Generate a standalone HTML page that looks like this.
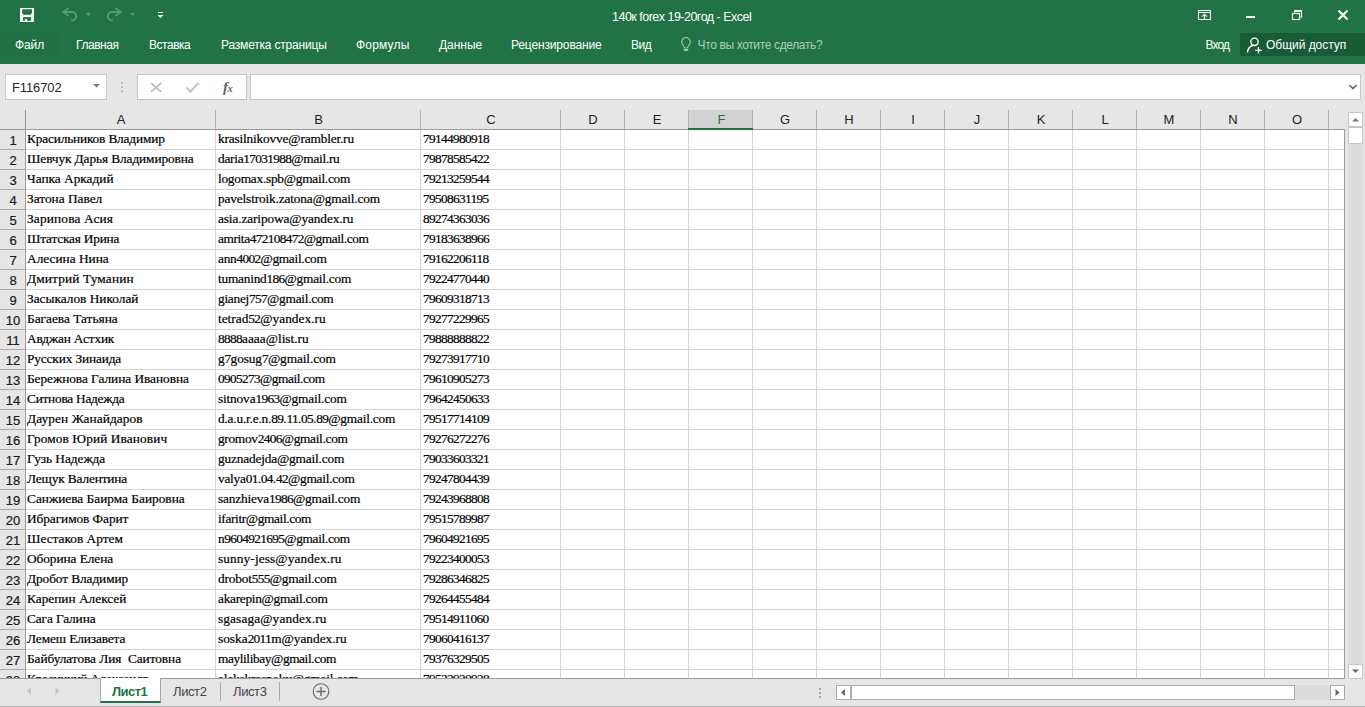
<!DOCTYPE html>
<html lang="ru"><head><meta charset="utf-8"><title>140к forex 19-20год - Excel</title>
<style>
*{box-sizing:border-box}
html,body{margin:0;padding:0}
body{width:1365px;height:707px;overflow:hidden;background:#e6e6e6;position:relative;font-family:"Liberation Sans",sans-serif;color:#262626}
.abs{position:absolute}
.green{position:absolute;left:0;top:0;width:1365px;height:64px;background:#217346}
.t{position:absolute;white-space:nowrap;color:#fff;font-size:12px;line-height:16px;height:16px}
.tab{top:37px}
.title{top:9px;left:612px;font-size:12.5px}
.dim{color:#a9cdb8}
.share{position:absolute;left:1240px;top:33px;width:125px;height:23px;background:#185c37}
.filebg{position:absolute;left:0;top:33px;width:59px;height:23px;background:#207044}
.box{position:absolute;background:#fff;border:1px solid #c6c6c6}
.nm{left:5px;top:74px;width:102px;height:26px}
.nmtxt{position:absolute;left:12px;top:80px;letter-spacing:-.12px;font-size:13px;line-height:16px;color:#262626}
.fxbox{left:137px;top:74px;width:110px;height:26px}
.fbar{left:250px;top:74px;width:1111px;height:26px}
.colhdr{position:absolute;left:0;top:110px;width:1345px;height:20px;background:#e6e6e6;border-bottom:1px solid #9b9b9b}
.colhdr:before{content:"";position:absolute;left:25px;top:0;width:1px;height:20px;background:#9b9b9b}
.ch{position:absolute;top:0;height:19px;line-height:19px;text-align:center;font-size:13px;color:#222;border-right:1px solid #b2b2b2;text-indent:1px;box-sizing:content-box}
.ch.sel{background:#d2d2d2;color:#217346;height:20px;border-right:1px solid #b2b2b2;border-left:1px solid #b2b2b2;margin-left:-1px;text-indent:2px}
.ch.sel:after{content:"";position:absolute;left:-1px;right:-1px;bottom:0;height:2px;background:#217346}
.grid{position:absolute;left:0;top:130px;width:1345px;height:549px;overflow:hidden;border-right:1px solid #9b9b9b;border-bottom:1px solid #9b9b9b;
 background-color:#fff;
 background-image:
  linear-gradient(#d4d4d4,#d4d4d4),linear-gradient(#d4d4d4,#d4d4d4),linear-gradient(#d4d4d4,#d4d4d4),
  repeating-linear-gradient(to right,transparent 0,transparent 63px,#d4d4d4 63px,#d4d4d4 64px),
  repeating-linear-gradient(to bottom,transparent 0,transparent 19px,#d4d4d4 19px,#d4d4d4 20px);
 background-size:1px 100%,1px 100%,1px 100%,784px 100%,100% 100%;
 background-position:215px 0,420px 0,560px 0,561px 0,0 0;
 background-repeat:no-repeat,no-repeat,no-repeat,no-repeat,repeat}
.rowhdr{position:absolute;left:0;top:0;width:26px;height:549px;background:#e6e6e6;border-right:1px solid #9b9b9b;
 background-image:repeating-linear-gradient(to bottom,transparent 0,transparent 19px,#ababab 19px,#ababab 20px)}
.row{position:absolute;left:0;height:20px;width:1344px;font-family:"Liberation Serif",serif;font-size:13.33px;line-height:19px;color:#000;white-space:nowrap;-webkit-text-stroke:.2px #000}
.row span{position:absolute;top:-1px;height:19px}
.rn{left:0;width:26px;text-align:center;font-family:"Liberation Sans",sans-serif;font-size:13px;color:#262626;line-height:20px;top:1px !important}
.ca{left:27px}
.cb{left:218px}
.cc{left:423px}
.tabbar{position:absolute;left:0;top:679px;width:1365px;height:28px;background:#e6e6e6}
.sheet{position:absolute;top:684px;font-size:13px;line-height:16px;color:#444;white-space:nowrap}
.active{position:absolute;left:100px;top:678px;width:61px;height:25px;background:#fff;border-bottom:2px solid #217346;border-right:1px solid #ababab;border-left:1px solid #ababab}
.sep{position:absolute;top:682px;width:1px;height:19px;background:#ababab}
.sbtn{position:absolute;background:#fff;border:1px solid #c6c6c6}
.track{position:absolute;background:#dcdcdc}
.fx{position:absolute;left:223px;top:78px;font-family:"Liberation Serif",serif;font-style:italic;font-size:15px;line-height:18px;color:#646464;font-weight:bold}
.fx span{font-size:10.5px;font-weight:bold;position:relative;top:0px;left:-.5px}
.botline{position:absolute;left:0;top:706px;width:1365px;height:1px;background:#b4b4b4}
.row i{font-style:normal;letter-spacing:-.667px}
.hb{border-color:#ababab}

</style></head>
<body>
<div class="green"></div>
<div class="filebg"></div>
<div class="share"></div>
<div class="t title" style="left:612px;letter-spacing:-0.51px">140к forex 19-20год - Excel</div>
<div class="t tab" style="left:15px;letter-spacing:-0.12px">Файл</div>
<div class="t tab" style="left:76px;letter-spacing:-0.44px">Главная</div>
<div class="t tab" style="left:149px;letter-spacing:-0.47px">Вставка</div>
<div class="t tab" style="left:221px;letter-spacing:-0.19px">Разметка страницы</div>
<div class="t tab" style="left:356px;letter-spacing:0.18px">Формулы</div>
<div class="t tab" style="left:439px;letter-spacing:-0.04px">Данные</div>
<div class="t tab" style="left:511px;letter-spacing:-0.15px">Рецензирование</div>
<div class="t tab" style="left:631px;letter-spacing:-0.50px">Вид</div>
<div class="t tab dim" style="left:697.5px;letter-spacing:-0.36px">Что вы хотите сделать?</div>
<div class="t tab" style="left:1205.5px;letter-spacing:-0.85px">Вход</div>
<div class="t tab" style="left:1266px;letter-spacing:-0.03px">Общий доступ</div>
<div class="box nm"></div>
<div class="nmtxt">F116702</div>
<div class="box fxbox"></div>
<div class="fx">f<span>x</span></div>
<div class="box fbar"></div>
<svg class="abs" style="left:0;top:0" width="1365" height="110" viewBox="0 0 1365 110" fill="none">
<!-- save -->
<rect x="20" y="8" width="14" height="14" fill="#fff"/>
<path d="M22.100 9.200h9.900v4.300h-.9v1.200h-8.100v-1.200h-.9z" fill="#217346"/>
<rect x="23" y="17.100" width="8.100" height="3.650" fill="#217346"/>
<rect x="25" y="19.100" width="2.100" height="1.650" fill="#fff"/>
<!-- undo -->
<path d="M68.600 8.200L63.300 12L68.600 15.800M63.800 12H72A4.200 4.200 0 0 1 72 20.400H71" stroke="#569a76" stroke-width="1.900"/>
<path d="M86 13h5l-2.500 3z" fill="#569a76"/>
<!-- redo -->
<path d="M115.400 8.200L120.700 12L115.400 15.800M120.200 12H112A4.200 4.200 0 0 0 112 20.400H113" stroke="#569a76" stroke-width="1.900"/>
<path d="M130 13h5l-2.500 3z" fill="#569a76"/>
<!-- customize -->
<rect x="158" y="12" width="5" height="1" fill="#fff"/>
<path d="M157.500 15h6l-3 3z" fill="#fff"/>
<!-- bulb -->
<path d="M684.600 48L682.500 44.200A4.200 4.200 0 1 1 689.500 44.200L687.400 48z" stroke="#9cc7ae" stroke-width="1.100"/>
<path d="M683.300 48.900h5.400l-1 2h-3.400z" fill="#9cc7ae"/>
<!-- ribbon options -->
<rect x="1198.500" y="10.500" width="12" height="9" stroke="#fff" stroke-width="1"/>
<path d="M1198.500 12.500h12" stroke="#fff" stroke-width="1"/>
<path d="M1204.500 19.500v-5M1202 16.700l2.500-2.500l2.500 2.500" stroke="#fff" stroke-width="1.100"/>
<!-- minimize -->
<rect x="1246" y="16" width="9" height="2" fill="#fff"/>
<!-- restore -->
<rect x="1292.500" y="13.500" width="7" height="6" stroke="#fff" stroke-width="1.100"/>
<path d="M1294.500 13v-2h7v6h-2" stroke="#fff" stroke-width="1.100"/>
<rect x="1294" y="10" width="8" height="1.700" fill="#fff"/>
<!-- close -->
<path d="M1338.500 10.500l9 9M1347.500 10.500l-9 9" stroke="#fff" stroke-width="2"/>
<!-- share person -->
<circle cx="1254.500" cy="41.800" r="3.700" stroke="#fff" stroke-width="1.400"/>
<path d="M1247.500 52.500c.3-4 2.500-6.300 5.500-7" stroke="#fff" stroke-width="1.400"/>
<path d="M1258.500 47v6.500M1255.200 50.300h6.600" stroke="#fff" stroke-width="1.300"/>
<!-- name box arrow -->
<path d="M93 84h7l-3.500 3.500z" fill="#777"/>
<!-- dots -->
<rect x="121" y="82" width="2" height="1.700" fill="#b4b4b4"/><rect x="121" y="86.300" width="2" height="1.700" fill="#b4b4b4"/><rect x="121" y="90.500" width="2" height="1.700" fill="#b4b4b4"/>
<!-- X and check -->
<path d="M151 82.800l10.200 9M161.200 82.800l-10.200 9" stroke="#bcbcbc" stroke-width="1.600"/>
<path d="M186.500 87.500l4 4l8-8.500" stroke="#c8c8c8" stroke-width="2.400"/>
<!-- formula expand -->
<path d="M1349.500 85l3.500 3.500l3.500-3.500" stroke="#666" stroke-width="1.600"/>
</svg>
<div class="colhdr">
<div class="ch" style="left:26px;width:189px">A</div>
<div class="ch" style="left:216px;width:204px">B</div>
<div class="ch" style="left:421px;width:139px">C</div>
<div class="ch" style="left:561px;width:63px">D</div>
<div class="ch" style="left:625px;width:63px">E</div>
<div class="ch sel" style="left:689px;width:63px">F</div>
<div class="ch" style="left:753px;width:63px">G</div>
<div class="ch" style="left:817px;width:63px">H</div>
<div class="ch" style="left:881px;width:63px">I</div>
<div class="ch" style="left:945px;width:63px">J</div>
<div class="ch" style="left:1009px;width:63px">K</div>
<div class="ch" style="left:1073px;width:63px">L</div>
<div class="ch" style="left:1137px;width:63px">M</div>
<div class="ch" style="left:1201px;width:63px">N</div>
<div class="ch" style="left:1265px;width:63px">O</div>
</div>
<div class="grid">
<div class="rowhdr"></div>
<div class="row" style="top:0px"><span class="rn">1</span><span class="ca" style="letter-spacing:-0.17px">Красильников Владимир</span><span class="cb" style="letter-spacing:-0.17px">krasilnikovve@rambler.ru</span><span class="cc"><i>79144980918</i></span></div>
<div class="row" style="top:20px"><span class="rn">2</span><span class="ca" style="letter-spacing:-0.10px">Шевчук Дарья Владимировна</span><span class="cb" style="letter-spacing:-0.27px">daria<i>17031988</i>@mail.ru</span><span class="cc"><i>79878585422</i></span></div>
<div class="row" style="top:40px"><span class="rn">3</span><span class="ca">Чапка Аркадий</span><span class="cb" style="letter-spacing:-0.25px">logomax.spb@gmail.com</span><span class="cc"><i>79213259544</i></span></div>
<div class="row" style="top:60px"><span class="rn">4</span><span class="ca">Затона Павел</span><span class="cb" style="letter-spacing:-0.15px">pavelstroik.zatona@gmail.com</span><span class="cc"><i>79508631195</i></span></div>
<div class="row" style="top:80px"><span class="rn">5</span><span class="ca" style="letter-spacing:0.16px">Зарипова Асия</span><span class="cb" style="letter-spacing:-0.12px">asia.zaripowa@yandex.ru</span><span class="cc"><i>89274363036</i></span></div>
<div class="row" style="top:100px"><span class="rn">6</span><span class="ca" style="letter-spacing:-0.20px">Штатская Ирина</span><span class="cb" style="letter-spacing:-0.40px">amrita<i>472108472</i>@gmail.com</span><span class="cc"><i>79183638966</i></span></div>
<div class="row" style="top:120px"><span class="rn">7</span><span class="ca">Алесина Нина</span><span class="cb" style="letter-spacing:-0.28px">ann<i>4002</i>@gmail.com</span><span class="cc"><i>79162206118</i></span></div>
<div class="row" style="top:140px"><span class="rn">8</span><span class="ca" style="letter-spacing:0.15px">Дмитрий Туманин</span><span class="cb" style="letter-spacing:-0.23px">tumanind<i>186</i>@gmail.com</span><span class="cc"><i>79224770440</i></span></div>
<div class="row" style="top:160px"><span class="rn">9</span><span class="ca">Засыкалов Николай</span><span class="cb" style="letter-spacing:-0.25px">gianej<i>757</i>@gmail.com</span><span class="cc"><i>79609318713</i></span></div>
<div class="row" style="top:180px"><span class="rn">10</span><span class="ca">Багаева Татьяна</span><span class="cb">tetrad<i>52</i>@yandex.ru</span><span class="cc"><i>79277229965</i></span></div>
<div class="row" style="top:200px"><span class="rn">11</span><span class="ca" style="letter-spacing:-0.16px">Авджан Астхик</span><span class="cb"><i>8888</i>aaaa@list.ru</span><span class="cc"><i>79888888822</i></span></div>
<div class="row" style="top:220px"><span class="rn">12</span><span class="ca" style="letter-spacing:-0.14px">Русских Зинаида</span><span class="cb" style="letter-spacing:-0.10px">g<i>7</i>gosug<i>7</i>@gmail.com</span><span class="cc"><i>79273917710</i></span></div>
<div class="row" style="top:240px"><span class="rn">13</span><span class="ca" style="letter-spacing:-0.04px">Бережнова Галина Ивановна</span><span class="cb" style="letter-spacing:-0.42px"><i>0905273</i>@gmail.com</span><span class="cc"><i>79610905273</i></span></div>
<div class="row" style="top:260px"><span class="rn">14</span><span class="ca" style="letter-spacing:-0.25px">Ситнова Надежда</span><span class="cb" style="letter-spacing:-0.16px">sitnova<i>1963</i>@gmail.com</span><span class="cc"><i>79642450633</i></span></div>
<div class="row" style="top:280px"><span class="rn">15</span><span class="ca" style="letter-spacing:0.10px">Даурен Жанайдаров</span><span class="cb" style="letter-spacing:-0.19px">d.a.u.r.e.n.<i>89</i>.<i>11</i>.<i>05</i>.<i>89</i>@gmail.com</span><span class="cc"><i>79517714109</i></span></div>
<div class="row" style="top:300px"><span class="rn">16</span><span class="ca" style="letter-spacing:0.10px">Громов Юрий Иванович</span><span class="cb" style="letter-spacing:-0.30px">gromov<i>2406</i>@gmail.com</span><span class="cc"><i>79276272276</i></span></div>
<div class="row" style="top:320px"><span class="rn">17</span><span class="ca" style="letter-spacing:-0.04px">Гузь Надежда</span><span class="cb" style="letter-spacing:-0.17px">guznadejda@gmail.com</span><span class="cc"><i>79033603321</i></span></div>
<div class="row" style="top:340px"><span class="rn">18</span><span class="ca" style="letter-spacing:-0.14px">Лещук Валентина</span><span class="cb" style="letter-spacing:-0.23px">valya<i>01</i>.<i>04</i>.<i>42</i>@gmail.com</span><span class="cc"><i>79247804439</i></span></div>
<div class="row" style="top:360px"><span class="rn">19</span><span class="ca">Санжиева Баирма Баировна</span><span class="cb" style="letter-spacing:-0.17px">sanzhieva<i>1986</i>@gmail.com</span><span class="cc"><i>79243968808</i></span></div>
<div class="row" style="top:380px"><span class="rn">20</span><span class="ca" style="letter-spacing:-0.07px">Ибрагимов Фарит</span><span class="cb" style="letter-spacing:-0.36px">ifaritr@gmail.com</span><span class="cc"><i>79515789987</i></span></div>
<div class="row" style="top:400px"><span class="rn">21</span><span class="ca">Шестаков Артем</span><span class="cb" style="letter-spacing:-0.34px">n<i>9604921695</i>@gmail.com</span><span class="cc"><i>79604921695</i></span></div>
<div class="row" style="top:420px"><span class="rn">22</span><span class="ca" style="letter-spacing:-0.07px">Оборина Елена</span><span class="cb" style="letter-spacing:0.10px">sunny-jess@yandex.ru</span><span class="cc"><i>79223400053</i></span></div>
<div class="row" style="top:440px"><span class="rn">23</span><span class="ca" style="letter-spacing:-0.09px">Дробот Владимир</span><span class="cb" style="letter-spacing:-0.19px">drobot<i>555</i>@gmail.com</span><span class="cc"><i>79286346825</i></span></div>
<div class="row" style="top:460px"><span class="rn">24</span><span class="ca">Карепин Алексей</span><span class="cb" style="letter-spacing:-0.29px">akarepin@gmail.com</span><span class="cc"><i>79264455484</i></span></div>
<div class="row" style="top:480px"><span class="rn">25</span><span class="ca" style="letter-spacing:-0.12px">Сага Галина</span><span class="cb" style="letter-spacing:0.11px">sgasaga@yandex.ru</span><span class="cc"><i>79514911060</i></span></div>
<div class="row" style="top:500px"><span class="rn">26</span><span class="ca" style="letter-spacing:-0.11px">Лемеш Елизавета</span><span class="cb">soska<i>2011</i>m@yandex.ru</span><span class="cc"><i>79060416137</i></span></div>
<div class="row" style="top:520px"><span class="rn">27</span><span class="ca" style="letter-spacing:-0.06px">Байбулатова Лия  Саитовна</span><span class="cb" style="letter-spacing:-0.40px">maylilibay@gmail.com</span><span class="cc"><i>79376329505</i></span></div>
<div class="row" style="top:540px"><span class="rn">28</span><span class="ca" style="letter-spacing:-0.25px">Красицкий Александр</span><span class="cb" style="letter-spacing:-0.19px">alekskrasnoky@gmail.com</span><span class="cc"><i>79522920928</i></span></div>
</div>
<div class="tabbar"></div>
<div class="active"></div>
<div class="sheet" style="left:112px;color:#217346;font-weight:bold;letter-spacing:-.55px">Лист1</div>
<div class="sheet" style="left:173px;letter-spacing:-.4px">Лист2</div>
<div class="sheet" style="left:233px;letter-spacing:-.4px">Лист3</div>
<div class="sep" style="left:220px"></div>
<div class="sep" style="left:279px"></div>
<div class="track" style="left:1348px;top:112px;width:15px;height:566px"></div>
<div class="sbtn" style="left:1348px;top:112px;width:15px;height:15px"></div>
<div class="sbtn" style="left:1348px;top:127px;width:15px;height:17px"></div>
<div class="sbtn" style="left:1348px;top:664px;width:15px;height:15px"></div>
<div class="track" style="left:836px;top:685px;width:509px;height:15px"></div>
<div class="sbtn hb" style="left:836px;top:685px;width:15px;height:15px"></div>
<div class="sbtn hb" style="left:851px;top:685px;width:444px;height:15px"></div>
<div class="sbtn hb" style="left:1330px;top:685px;width:15px;height:15px"></div>
<div class="botline"></div>
<svg class="abs" style="left:0;top:679px" width="1365" height="28" viewBox="0 679 1365 28" fill="none">
<path d="M31 687.500v7.500l-4-3.750z" fill="#c6c6c6"/>
<path d="M55.500 687.500v7.500l4-3.750z" fill="#c6c6c6"/>
<circle cx="321" cy="691.500" r="7.800" stroke="#6a6a6a" stroke-width="1.100"/>
<path d="M316.500 691.500h9M321 687v9" stroke="#6a6a6a" stroke-width="1.400"/>
<rect x="819" y="688" width="2" height="2" fill="#a6a6a6"/><rect x="819" y="692" width="2" height="2" fill="#a6a6a6"/><rect x="819" y="696" width="2" height="2" fill="#a6a6a6"/>
<path d="M845 689v7l-4-3.500z" fill="#666"/>
<path d="M1335.500 689v7l4-3.500z" fill="#666"/>
</svg>
<svg class="abs" style="left:1345px;top:110px" width="20" height="570" viewBox="1345 110 20 570" fill="none">
<path d="M1352 121.500h7l-3.500-3.500z" fill="#777"/>
<path d="M1352 669.500h7l-3.500 3.500z" fill="#666"/>
</svg>
</body></html>
